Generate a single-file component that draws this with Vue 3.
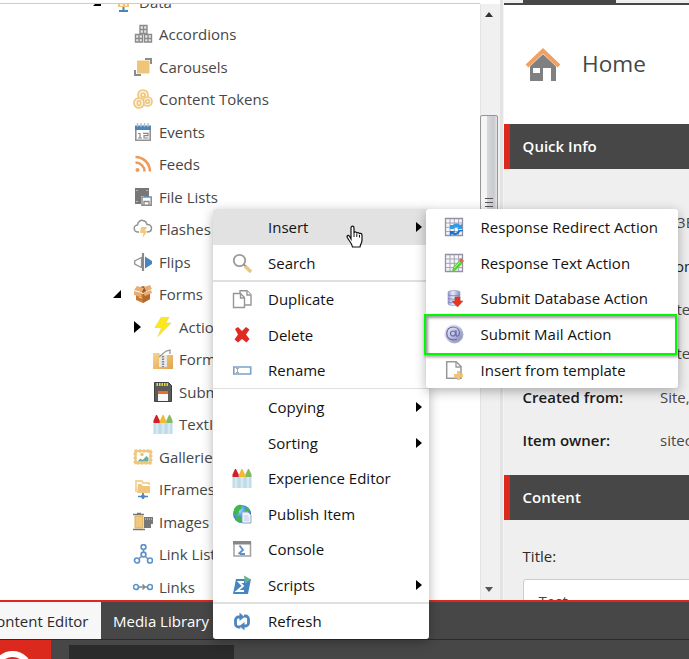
<script setup>
const tree = [
  { label: 'Data', icon: 'data', level: 0, arrow: 'open' },
  { label: 'Accordions', icon: 'blocks', level: 1 },
  { label: 'Carousels', icon: 'carousel', level: 1 },
  { label: 'Content Tokens', icon: 'tokens', level: 1 },
  { label: 'Events', icon: 'calendar', level: 1 },
  { label: 'Feeds', icon: 'feed', level: 1 },
  { label: 'File Lists', icon: 'files', level: 1 },
  { label: 'Flashes', icon: 'cloud', level: 1 },
  { label: 'Flips', icon: 'flip', level: 1 },
  { label: 'Forms', icon: 'box', level: 1, arrow: 'open' },
  { label: 'Actions', icon: 'bolt', level: 2, arrow: 'closed' },
  { label: 'Forms', icon: 'folder', level: 2 },
  { label: 'Submit', icon: 'disk', level: 2 },
  { label: 'TextInput', icon: 'crayons', level: 2 },
  { label: 'Galleries', icon: 'gallery', level: 1 },
  { label: 'IFrames', icon: 'netfolder', level: 1 },
  { label: 'Images', icon: 'film', level: 1 },
  { label: 'Link Lists', icon: 'nodes', level: 1 },
  { label: 'Links', icon: 'links', level: 1 },
]
const menu = [
  { label: 'Insert', more: true, active: true },
  { label: 'Search', icon: 'search' },
  { rule: 'thick' },
  { label: 'Duplicate', icon: 'copy' },
  { label: 'Delete', icon: 'delete' },
  { label: 'Rename', icon: 'rename' },
  { rule: 'thin' },
  { label: 'Copying', more: true },
  { label: 'Sorting', more: true },
  { label: 'Experience Editor', icon: 'crayons' },
  { label: 'Publish Item', icon: 'globe' },
  { label: 'Console', icon: 'console' },
  { label: 'Scripts', icon: 'script', more: true },
  { rule: 'thick' },
  { label: 'Refresh', icon: 'refresh' },
]
const inserts = [
  { label: 'Response Redirect Action', icon: 'gridsync' },
  { label: 'Response Text Action', icon: 'gridpen' },
  { label: 'Submit Database Action', icon: 'database' },
  { label: 'Submit Mail Action', icon: 'mail' },
  { label: 'Insert from template', icon: 'newpage' },
]
const info = [
  { name: 'Item ID:', value: '{A3E4', pad: 'id' },
  { name: 'Item name:', value: 'Home', pad: 'nm' },
  { name: 'Item path:', value: '/sitecore' },
  { name: 'Template:', value: '/sitecore' },
  { name: 'Created from:', value: 'Site,' },
  { name: 'Item owner:', value: 'sitecore' },
]
</script>

<template>
  <div class="screen">
    <svg class="defs" width="0" height="0">
      <defs>
        <linearGradient id="gDisc" x1="0" y1="0" x2="1" y2="1">
          <stop offset="0" stop-color="#f3f4fc" /><stop offset=".5" stop-color="#c3c6e6" /><stop offset="1" stop-color="#7a80b4" />
        </linearGradient>
        <linearGradient id="gDb" x1="0" x2="1">
          <stop offset="0" stop-color="#8f95ca" /><stop offset=".4" stop-color="#e9ebfa" /><stop offset="1" stop-color="#8388bd" />
        </linearGradient>
        <radialGradient id="gEarth" cx=".35" cy=".3" r=".8">
          <stop offset="0" stop-color="#a7dcf8" /><stop offset=".5" stop-color="#3a8fd4" /><stop offset="1" stop-color="#174a91" />
        </radialGradient>
        <linearGradient id="gFold" x1="0" y1="0" x2="1" y2="1">
          <stop offset="0" stop-color="#f8d48d" /><stop offset="1" stop-color="#dfa44e" />
        </linearGradient>
      </defs>
      <symbol id="i-data" viewBox="0 0 20 20"><path d="M5 1h11v14H5z" fill="#efc678" /><path d="M7 13h3M12 13h2" stroke="#fff" stroke-width="1.500" /><path d="M10.500 15v4M6 19h9" stroke="#4a84bd" stroke-width="2" /></symbol>
      <symbol id="i-blocks" viewBox="0 0 20 20"><g fill="#e6e6e6" stroke="#8b8b8b" stroke-width="1.400"><path d="M7 1.500h7v8H7zM10.500 1.500v8M7 5.500h7M2.500 10.500h7v7.500h-7zM6 10.500v7.500M2.500 14.500h7M11.500 10.500h7v7.500h-7zM15 10.500v7.500M11.500 14.500h7" /></g></symbol>
      <symbol id="i-carousel" viewBox="0 0 20 20"><path d="M12 1h7v6h-2V3h-5zM1 13h2v4h5v2H1z" fill="#8c8c8c" /><rect x="4" y="3.500" width="12.500" height="13" rx="1" fill="#edc57b" /></symbol>
      <symbol id="i-tokens" viewBox="0 0 20 20"><g fill="#fff7e6" stroke="#edc77e" stroke-width="1.700"><circle cx="10" cy="6" r="5" /><circle cx="10" cy="6" r="2" /><circle cx="14.500" cy="12.500" r="4.500" /><circle cx="14.500" cy="12.500" r="1.800" /><circle cx="6" cy="14" r="5" /><ellipse cx="6" cy="14" rx="1.700" ry="2.500" /></g></symbol>
      <symbol id="i-calendar" viewBox="0 0 20 20"><path d="M2.800 4v14.200h14.400V4" fill="#fff" stroke="#929292" stroke-width="1.600" /><path d="M2 3.500h16V8H2z" fill="#4b85be" /><path d="M4.500 1v4M8 1v4M11.500 1v4M15 1v4" stroke="#a9bdd1" stroke-width="1.300" /><path d="M5 11.500h2V16M5 16h4M10 11.300h5v2.400h-4V16h4.500" fill="none" stroke="#878787" stroke-width="1.200" /></symbol>
      <symbol id="i-feed" viewBox="0 0 20 20"><circle cx="4.500" cy="16" r="2" fill="#ee9a5a" /><path d="M2.500 8.500a9 9 0 0 1 9 9M2.500 3a14.500 14.500 0 0 1 14.500 14.500" fill="none" stroke="#ee9a5a" stroke-width="2.500" /></symbol>
      <symbol id="i-files" viewBox="0 0 20 20"><path d="M2 1h14v8H8v8H2z" fill="#777" /><path d="M4 3v1M4 14v1M14 3v1" stroke="#ddd" stroke-width="1.300" /><path d="M9 10h9.200v8.200H9z" fill="#fff" stroke="#8a8a8a" stroke-width="1.500" /><path d="M11 9h5" stroke="#4b85be" stroke-width="1.500" /><path d="M11 18v-3.500h5V18" fill="none" stroke="#888" stroke-width="1.300" /></symbol>
      <symbol id="i-cloud" viewBox="0 0 20 20"><path d="M6 13H5a3.500 3.500 0 0 1-.6-7C5 2 8 1 10 1.500c2 .3 3.500 1.800 4 4 3-.2 4.500 1.500 4.500 3.700S17 13 14 13" fill="#fff" stroke="#929292" stroke-width="1.500" /><path d="M8 8h6l-2 4h2.500L9.500 19l1-5H7z" fill="#f0ca7f" /></symbol>
      <symbol id="i-flip" viewBox="0 0 20 20"><path d="M8.500 5.500 1.700 9v3l6.800 3.500z" fill="#fff" stroke="#929292" stroke-width="1.300" /><path d="M12 4.500 19 9v3l-7 4.500z" fill="#4685c1" /><path d="M10 1v18" stroke="#8a8a8a" stroke-width="2.200" /></symbol>
      <symbol id="i-box" viewBox="0 0 20 20"><path d="m3 8 7 2 7-3v8l-7 4-7-3z" fill="#c97b35" /><path d="m10 10 7-3v8l-7 4z" fill="#b56a2c" /><path d="m3 5 7-3 7 3-7 4z" fill="#965725" /><path d="m1 6 3-4 7 2-2 4zM11 3l6-2 2 4-6 2zM1 7l8 2-1 4-7-2zM10 9l8-3 1 3-7 3z" fill="#e9ad72" /><path d="m6 13 3 1" stroke="#efcfad" /></symbol>
      <symbol id="i-bolt" viewBox="0 0 20 20"><path d="M8 .5h8L12.500 6H18L5 19.500l3.500-9H2z" fill="#ffe817" stroke="#dfd45a" stroke-width=".6" /></symbol>
      <symbol id="i-folder" viewBox="0 0 20 20"><path d="M0 4h6l1.500 2H20v14H0z" fill="url(#gFold)" /><path d="M6 6h8v12H6z" fill="#e8e8e5" /><path d="M6 8 13 2l4-1v4" fill="none" stroke="#999" stroke-width="1.300" /><path d="M10 7v11" stroke="#888" stroke-width="2.200" stroke-dasharray="1.500 1" /></symbol>
      <symbol id="i-disk" viewBox="0 0 20 20"><path d="M1.500.5h14l3 3v16h-17z" fill="#5a5a5a" stroke="#404040" /><path d="M3.500 2.500h12" stroke="#e4dc35" stroke-width="3" stroke-dasharray="1.500 1" /><path d="M5 11h10v8H5z" fill="#f8f8f8" /><path d="M5 9h10v3H5z" fill="#f26a21" /></symbol>
      <symbol id="i-crayons" viewBox="0 0 20 20"><path d="M.5 7.500h19V20H.5z" fill="#bfdbe8" /><path d="M4 9v11M10 9v11M16 9v11" stroke="#d6e9f1" stroke-width="2.500" /><path d="M.5 9V6.500L3 1h1l2.700 5.500V9z" fill="#d02222" /><path d="M7 9V6.500L9.500 1h1L13 6.500V9z" fill="#f5b931" /><path d="M13.400 9V6.500L16 1h1l2.500 5.500V9z" fill="#86b865" /></symbol>
      <symbol id="i-gallery" viewBox="0 0 20 20"><path d="M2.500 4h15v12h-15z" fill="#fff" stroke="#efc982" stroke-width="2.500" /><path d="M2 4h16v12H2z" fill="none" stroke="#edc57b" stroke-dasharray="2 2" stroke-width="2.800" /><path d="m4.500 14.500 3-3 2 1.500 4-4 2 2v3.500z" fill="#70ac99" /><circle cx="9" cy="7.500" r="1.700" fill="#efc36d" /></symbol>
      <symbol id="i-netfolder" viewBox="0 0 20 20"><path d="M3 13V2h6l1 2h6v2" fill="#fff" stroke="#efc67b" stroke-width="1.400" /><path d="M5 5h3l2 2h7v7H4z" fill="#efc67b" /><path d="M10 14v6M5 17.500h10M8 17.500h4" stroke="#4b86bf" stroke-width="1.700" /><circle cx="10" cy="17.500" r="2" fill="#4b86bf" /></symbol>
      <symbol id="i-film" viewBox="0 0 20 20"><path d="M0 2.500h11M4 1.500h4M0 17.500h12" stroke="#777" stroke-width="1.700" /><path d="M2 4h8v12H2z" fill="#efc77d" stroke="#dcae61" /><path d="M11 5h9v7h-2v4h-7z" fill="#777" /><path d="M12 7h7" stroke="#ddd" stroke-dasharray="1 1" /></symbol>
      <symbol id="i-nodes" viewBox="0 0 20 20"><path d="M10.500 4v7L4 16M10.500 11l6 5" fill="none" stroke="#888" stroke-width="1.500" /><g fill="#fff" stroke="#5b93cb" stroke-width="1.700"><circle cx="10.500" cy="3" r="2.400" /><circle cx="10.500" cy="10.500" r="2.400" /><circle cx="4" cy="16.500" r="2.500" /><circle cx="17" cy="16.500" r="2.500" /></g></symbol>
      <symbol id="i-links" viewBox="0 0 20 20"><path d="M6 10h8M9.500 7.500 12 10l-2.500 2.500" fill="none" stroke="#888" stroke-width="1.500" /><g fill="#fff" stroke="#5d94ca" stroke-width="1.700"><circle cx="3" cy="10" r="2.500" /><circle cx="17" cy="10" r="2.500" /></g></symbol>
      <symbol id="i-search" viewBox="0 0 20 20"><path d="m13 13 6 6" stroke="#efc57a" stroke-width="3.400" /><circle cx="7.500" cy="7.500" r="5.700" fill="#fff" stroke="#9b9b9b" stroke-width="1.800" /><path d="m12 11.500 1.500 1.500" stroke="#888" stroke-width="1.700" /></symbol>
      <symbol id="i-copy" viewBox="0 0 20 20"><g fill="#fff" stroke="#969696" stroke-width="1.400"><path d="M8 1.700h7l4 4V16H8z" /><path d="M15 2v4h4M1.500 4.500h7l4 4V18.500h-11zM8.500 5v4h4" /></g></symbol>
      <symbol id="i-delete" viewBox="0 0 20 20"><path d="m3 4 3-2 4 4 4-4 3.500 2.500-3.500 5 3.500 4.500-3 3.500-4.500-3.500-4 3.500L2.500 14.500l3.500-5z" fill="#df2b22" /></symbol>
      <symbol id="i-rename" viewBox="0 0 20 20"><path d="M1.800 7h16.900v7H1.800z" fill="#fff" stroke="#78a3d0" stroke-width="1.600" /><path d="M4 8.500h3M5.500 8.500v4M4 12.500h3" stroke="#a1a1a1" stroke-width=".9" /></symbol>
      <symbol id="i-globe" viewBox="0 0 20 20"><circle cx="10" cy="10" r="9" fill="url(#gEarth)" /><path d="M2 5c3-5 7-5 8-3L9 5l-2 2-1 4-4-1zM13 2l4 3 1 4-4-1zM3 13l4-1 3 3-2 4c-3-1-5-3-5-6z" fill="#43b54b" /><path d="M10 8h6l3 3v8h-9z" fill="#eaf1fb" stroke="#92a9ca" /><path d="M12 12h4M12 14h5M12 16h5" stroke="#bdcce2" /></symbol>
      <symbol id="i-console" viewBox="0 0 20 20"><path d="M2 4h16.500v13H2z" fill="#fff" stroke="#a1a1a1" stroke-width="1.500" /><path d="M1 2h18v3.500H1z" fill="#888" /><path d="m7.500 6.500 3.500 4.500-4.500 4M8 15h5" fill="none" stroke="#5a91cb" stroke-width="1.900" /></symbol>
      <symbol id="i-script" viewBox="0 0 20 20"><path d="M4 4h15l-3 15H1z" fill="#4785c0" /><path d="M12 7H7l4 4-6 5h7" fill="none" stroke="#fff" stroke-width="1.800" /><path d="m12 .5 7 4-6 4z" fill="#65b193" /></symbol>
      <symbol id="i-refresh" viewBox="0 0 20 20"><g fill="none" stroke="#4e86bd" stroke-width="2.800"><path d="M8.500 16H6.500a3 3 0 0 1-3-3V9a3 3 0 0 1 3-3H9M12 5h1.500a3 3 0 0 1 3 3v4a3 3 0 0 1-3 3H11" /></g><path d="m7.500 1.500 5 4.500-5 4zM12.500 11v8.500L7.500 15z" fill="#4e86bd" /></symbol>
      <symbol id="i-gridbase" viewBox="0 0 20 20"><path d="M1.500 1.500h17v17h-17z" fill="#f5f5fa" stroke="#9292a2" stroke-width="1.300" /><path d="M6 2v16M10.300 2v16M14.600 2v16M2 6h16M2 10.300h16M2 14.600h16" stroke="#a4a4b4" /></symbol>
      <symbol id="i-gridsync" viewBox="0 0 20 20"><use href="#i-gridbase" /><path d="M6 8h3c2-2 5-2 7 0l2-1v5h-5l1.500-1.500c-2-1-4 0-5 1.500H6z" fill="#2c9deb" /><path d="M19 14h-3c-1 4-5 5-8 3l-2 2v-5h5l-1.500 1.500c2 1 4 0 5-2.500h4z" fill="#1671d5" /></symbol>
      <symbol id="i-gridpen" viewBox="0 0 20 20"><use href="#i-gridbase" /><path d="m8 19 1-5 7-7 3 3-7 7z" fill="#5dcf3a" /><path d="m10 15 6-6" stroke="#b9f492" /><path d="m15 7 2-2 3 3-2 2z" fill="#e36550" /></symbol>
      <symbol id="i-database" viewBox="0 0 20 20"><path d="M4 4c0-2 12-2 12 0v12c0 2-12 2-12 0z" fill="url(#gDb)" stroke="#a0a5cb" stroke-width=".7" /><path d="M4 7c3 1 9 1 12 0M4 10.500c3 1 9 1 12 0M4 14c3 1 9 1 12 0" fill="none" stroke="#777eb2" stroke-width=".8" /><path d="M11 9h5v4h3l-5.500 6L8 13h3z" fill="#e7361b" stroke="#b7432c" stroke-width=".5" /></symbol>
      <symbol id="i-mail" viewBox="0 0 20 20"><circle cx="10.500" cy="10.500" r="9" fill="#777b9a" opacity=".6" /><circle cx="9.500" cy="9.500" r="9" fill="url(#gDisc)" /><g fill="none" stroke="#676ca3" stroke-width="1.200"><circle cx="9" cy="9.500" r="2.500" /><path d="M12 6v4c0 4 3.500 2 3.500-1C15.500 5 12.500 3 9 3 5 3 2.800 6 2.800 9.500c0 5 5 8 10 5.500" /></g></symbol>
      <symbol id="i-newpage" viewBox="0 0 20 20"><path d="M2.700 1.700h9.500L17 6.500v11.800H2.700z" fill="#fff" stroke="#989898" stroke-width="1.500" /><path d="M12 2v5h5" fill="none" stroke="#989898" stroke-width="1.300" /><path d="M14.500 11v9M10 15.500h9" stroke="#edc579" stroke-width="2.800" /></symbol>
    </svg>

    <main class="workspace">
      <section class="tree">
        <div class="rows">
          <div v-for="(n, i) in tree" :key="i" class="node" :class="'level' + n.level">
            <span class="twist"><i v-if="n.arrow" :class="n.arrow"></i></span>
            <svg class="ico"><use :href="'#i-' + n.icon" /></svg>
            <span class="name">{{ n.label }}</span>
          </div>
        </div>
      </section>
      <div class="scroll">
        <i class="up"></i>
        <div class="thumb"><i></i><i></i><i></i></div>
        <i class="down"></i>
      </div>
      <div class="splitter"></div>
      <section class="editor">
        <div class="tabs"><span></span></div>
        <header class="head">
          <svg width="36" height="36" viewBox="0 0 36 36"><path d="M5 18 18 6l13 12v16h-5V21h-8v13H5z" fill="#808080" /><path d="M8 21h7v5H8z" fill="#fff" /><path d="M2 18 18 3l16 15" fill="none" stroke="#fff" stroke-width="6" /><path d="M2 19 18 3.800 34 19" fill="none" stroke="#f0a062" stroke-width="4" /></svg>
          <h1>Home</h1>
        </header>
        <h2>Quick Info</h2>
        <div class="info">
          <div v-for="r in info" :key="r.name" class="line"><b>{{ r.name }}</b><span :class="r.pad">{{ r.value }}</span></div>
        </div>
        <h2>Content</h2>
        <div class="field"><label>Title:</label><div class="input">Test</div></div>
      </section>
    </main>
    <nav class="dock"><span class="on">Content Editor</span><span>Media Library</span></nav>
    <footer>
      <div class="logo"><svg width="51" height="19"><circle cx="12.500" cy="31" r="17" fill="none" stroke="#fff" stroke-width="6" /></svg></div>
      <div class="slot"></div>
    </footer>

    <div class="menu context">
      <template v-for="(m, i) in menu" :key="i">
        <div v-if="m.rule" class="rule" :class="m.rule"></div>
        <div v-else class="item" :class="{ active: m.active }">
          <svg class="ico"><use v-if="m.icon" :href="'#i-' + m.icon" /></svg>
          <span>{{ m.label }}</span>
          <i v-if="m.more" class="closed"></i>
        </div>
      </template>
    </div>
    <div class="menu sub">
      <div v-for="m in inserts" :key="m.label" class="item">
        <svg class="ico"><use :href="'#i-' + m.icon" /></svg><span>{{ m.label }}</span>
      </div>
    </div>
    <div class="highlight"></div>
    <svg class="cursor" width="18" height="24" viewBox="0 0 18 24"><path d="M5 14V3c0-2.500 3-2.500 3 0v5c0-1.500 2.800-1.500 2.800.5 0-1.500 2.700-1.200 2.700.7 0-1.400 2.500-1 2.500 1V15c0 3-1.500 4-2 7H6.500C6 18 3 16 1.300 12.500c-.8-2 1-2.700 2.200-1.200z" fill="#fff" stroke="#111" stroke-width="1.200" /><path d="M8 8v4M10.800 9v3M13.500 10v2.500" stroke="#111" /></svg>
  </div>
</template>

<style>
body { margin: 0; overflow: hidden; }
</style>
<style scoped>
.screen { position: relative; width: 689px; height: 659px; overflow: hidden; display: flex; flex-direction: column; background: #fff; font: 15px/20px "Open Sans", "Noto Sans", sans-serif; color: #474747; }
.screen * { box-sizing: border-box; }
.defs { position: absolute; }
.workspace { display: flex; height: 600px; flex: none; }
.tree { width: 480px; margin-top: 3px; border-top: 1px solid #ccc; overflow: hidden; }
.rows { margin-top: -18.7px; }
.node { height: 32.5px; display: flex; align-items: center; white-space: nowrap; }
.level0 { padding-left: 93px; }
.level1 { padding-left: 113px; }
.level2 { padding-left: 133px; }
.twist { width: 20px; display: flex; }
.ico { width: 20px; height: 20px; flex: none; }
.node .name { margin-left: 6px; }
.open { border-left: 8px solid transparent; border-bottom: 8px solid #000; }
.closed { border-left: 6px solid #000; border-top: 5px solid transparent; border-bottom: 5px solid transparent; }
.twist .closed { margin-left: 1px; border-left-width: 7px; border-top-width: 6px; border-bottom-width: 6px; }
.scroll { width: 20px; margin-top: 4px; background: #f0f0f0; border-left: 1px solid #e3e3e3; display: flex; flex-direction: column; align-items: center; padding: 8px 3px 8px 0; }
.up { border: 4px solid transparent; border-top: 0; border-bottom: 5px solid #333; }
.down { margin-top: auto; border: 4px solid transparent; border-bottom: 0; border-top: 5px solid #555; }
.thumb { width: 18px; height: 175px; margin-top: 98px; border: 1px solid #969696; border-radius: 2px; background: linear-gradient(90deg, #f5f5f5 0 35%, #d6d8dc 40%, #c8cacf 80%, #e4e4e4); display: flex; flex-direction: column; align-items: center; justify-content: center; gap: 3px; }
.thumb i { width: 8px; height: 1px; background: #555; }
.splitter { width: 4px; background: #e3e3e3; border-right: 1px solid #f5f5f5; }
.editor { flex: 1; overflow: hidden; background: #efefef; }
.tabs { height: 5px; border-bottom: 2px solid #474747; padding-left: 19px; }
.tabs span { display: block; width: 93px; height: 3px; background: #474747; }
.head { height: 119px; background: #fff; display: flex; align-items: center; padding-left: 21px; }
h1 { margin: 0 0 2px 21px; font-size: 22.6px; line-height: 30px; font-weight: 400; }
h2 { margin: 0; height: 45px; border-left: 6px solid #dc291e; background: #474747; color: #fff; font-size: 15px; line-height: 45px; font-weight: 600; padding-left: 12.6px; }
.info { height: 306px; padding-top: 31px; }
.line { height: 43.7px; display: flex; align-items: center; padding-left: 18.6px; white-space: nowrap; }
.line b { width: 137.4px; flex: none; font-weight: 600; color: #1a1a1a; }
.line .id { padding-left: 2px; }
.line .nm { padding-left: 4px; color: #222; }
.field { padding: 26px 0 0 18.6px; color: #2b2b2b; }
.field label { display: block; height: 33px; }
.input { width: 300px; height: 42px; border: 1px solid #ccc; border-radius: 3px; background: #fff; padding: 11px 15px; color: #474747; }
.dock { height: 40px; flex: none; border-top: 2px solid #dc291e; border-bottom: 1px solid #2b2b2b; background: #474747; color: #fff; display: flex; line-height: 38px; white-space: nowrap; }
.dock span { padding-left: 12px; }
.dock .on { width: 101px; display: flex; justify-content: flex-end; padding: 0 12.5px 0 0; background: #f7f7f7; color: #2b2b2b; }
footer { height: 19px; background: #474747; display: flex; }
.logo { width: 51px; background: #dc291e; overflow: hidden; }
.slot { width: 165px; margin: 5px 0 0 18px; background: #2b2b2b; }
.menu { position: absolute; top: 209px; background: #fff; color: #131313; border-radius: 3px; box-shadow: 0 3px 12px rgba(0, 0, 0, .3); }
.context { left: 213px; width: 216px; height: 430px; overflow: visible; }
.sub { left: 426px; width: 252px; height: 179px; }
.item { height: 35.45px; display: flex; align-items: center; padding: 1px 8px 0 19px; white-space: nowrap; }
.item span { flex: 1; margin: 0 0 0 16px; }
.item.active { height: 36px; margin-bottom: -.55px; padding-top: 0; background: #e2e2e2; border-radius: 3px 0 0; }
.item > .closed { margin-right: -1px; }
.rule { background: #e0e0e0; }
.thick { height: 2px; margin-bottom: -.8px; }
.thin { height: 1px; margin-top: .8px; }
.sub .item { height: 35.6px; padding: .8px 8px 0 18px; }
.sub .item span { margin-left: 16.6px; }
.highlight { position: absolute; left: 424px; top: 314px; width: 253px; height: 41px; border: 2px solid #00f800; box-shadow: 1px 2px 3px rgba(0, 0, 0, .4), inset 2px 2px 3px rgba(0, 0, 0, .4); }
.cursor { position: absolute; left: 346px; top: 225px; }
</style>
